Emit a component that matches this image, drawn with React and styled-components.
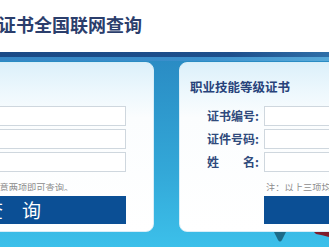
import React from 'react';
import styled, { createGlobalStyle } from 'styled-components';

const GlobalStyle = createGlobalStyle`
  html, body {
    margin: 0;
    padding: 0;
    background: #ffffff;
    overflow: hidden;
  }
  body {
    font-family: "Noto Sans CJK SC", "Noto Sans", sans-serif;
  }
`;

const Page = styled.div`
  width: 329px;
  height: 247px;
  overflow: hidden;
`;

const Header = styled.header`
  height: 52px;
  background: #ffffff;
  overflow: hidden;
`;

const Title = styled.h1`
  margin: 13px 0 0 -38px;
  font-size: 18px;
  line-height: 22px;
  font-weight: 700;
  color: #2b3e6c;
  white-space: nowrap;
`;

const Band = styled.div`
  height: 5px;
  background: linear-gradient(90deg, #1a4a86 0%, #1d4f8c 70%, #2f6fa8 100%);
`;

const SubBand = styled.div`
  height: 4px;
  background: linear-gradient(90deg, #3586c4 0%, #3b90cc 60%, #58a9d8 100%);
`;

const Main = styled.main`
  background: linear-gradient(180deg, #2a8cc4 0%, #33a8d8 60%, #3cc0ea 100%);
  padding-top: 1px;
`;

const Panels = styled.div`
  display: flex;
  gap: 25px;
  margin-left: -180px;
`;

const Panel = styled.section`
  flex: 0 0 ${(p) => p.$width}px;
  height: 170px;
  box-sizing: border-box;
  padding: 15px 27px 8px 10px;
  border-radius: 8px;
  border: 1px solid #d8eef8;
  background: linear-gradient(180deg, #dcf0fa 0px, #eef8fd 30px, #fbfdfe 55px, #ffffff 100%);
`;

const PanelTitle = styled.h2`
  margin: 0 0 11px 0;
  font-size: 12.5px;
  line-height: 17px;
  font-weight: 700;
  color: #27427a;
  height: 17px;
`;

const Form = styled.div`
  display: grid;
  grid-template-columns: 58px 1fr;
  margin-left: 16px;
  row-gap: 3px;
`;

const Label = styled.label`
  font-size: 12px;
  font-weight: 700;
  color: #2f4a7c;
  line-height: 20px;
  text-align: right;
  padding-right: 5px;
  white-space: nowrap;
`;

const Input = styled.div`
  height: 20px;
  box-sizing: border-box;
  border: 1px solid #cfd7de;
  background: #ffffff;
`;

const Note = styled.p`
  grid-column: 2;
  margin: 4px 0 0 2px;
  height: 12px;
  line-height: 12px;
  white-space: nowrap;
  overflow: hidden;
`;

/* 12px scaled down: small CJK text is not clamped by the browser minimum */
const NoteText = styled.span`
  display: inline-block;
  font-size: 12px;
  color: #8c8c8c;
  transform: scale(0.77);
  transform-origin: 0 50%;
`;

const Button = styled.button`
  grid-column: 2;
  margin-top: 2px;
  height: 28px;
  border: none;
  border-radius: 0;
  background: #0b4f95;
  color: #ffffff;
  font-family: "Noto Sans CJK SC", sans-serif;
  font-size: 19px;
  line-height: 28px;
  padding: 0 6px 0 0;
  text-align: center;
  white-space: pre;
`;

const Deco = styled.svg`
  display: block;
`;

function QueryPanel({ title, note, fields, width }) {
  return (
    <Panel $width={width}>
      <PanelTitle>{title}</PanelTitle>
      <Form>
        {fields.map((f) => (
          <React.Fragment key={f}>
            <Label>{f}</Label>
            <Input />
          </React.Fragment>
        ))}
        <Note>
          <NoteText>{note}</NoteText>
        </Note>
        <Button>{'查\u3000询'}</Button>
      </Form>
    </Panel>
  );
}

export default function App() {
  return (
    <Page>
      <GlobalStyle />
      <Header>
        <Title>资格证书全国联网查询</Title>
      </Header>
      <Band />
      <SubBand />
      <Main>
        <Panels>
          <QueryPanel
            width={334}
            title="职业资格证书"
            note="注：以上三项信息中任意两项即可查询。"
            fields={['证书编号:', '证件号码:', '姓　　名:']}
          />
          <QueryPanel
            width={400}
            title="职业技能等级证书"
            note="注：以上三项均为必填项。"
            fields={['证书编号:', '证件号码:', '姓　　名:']}
          />
        </Panels>
        <Deco width="329" height="15" viewBox="0 0 329 15">
          <path d="M274 0 L286 0 L282 8 Q280 11 278 8 Z" fill="#1d6b88" />
          <path d="M314 0 L329 0 L329 5 Q322 3 316 2 Z" fill="#7e1d2c" />
        </Deco>
      </Main>
    </Page>
  );
}
